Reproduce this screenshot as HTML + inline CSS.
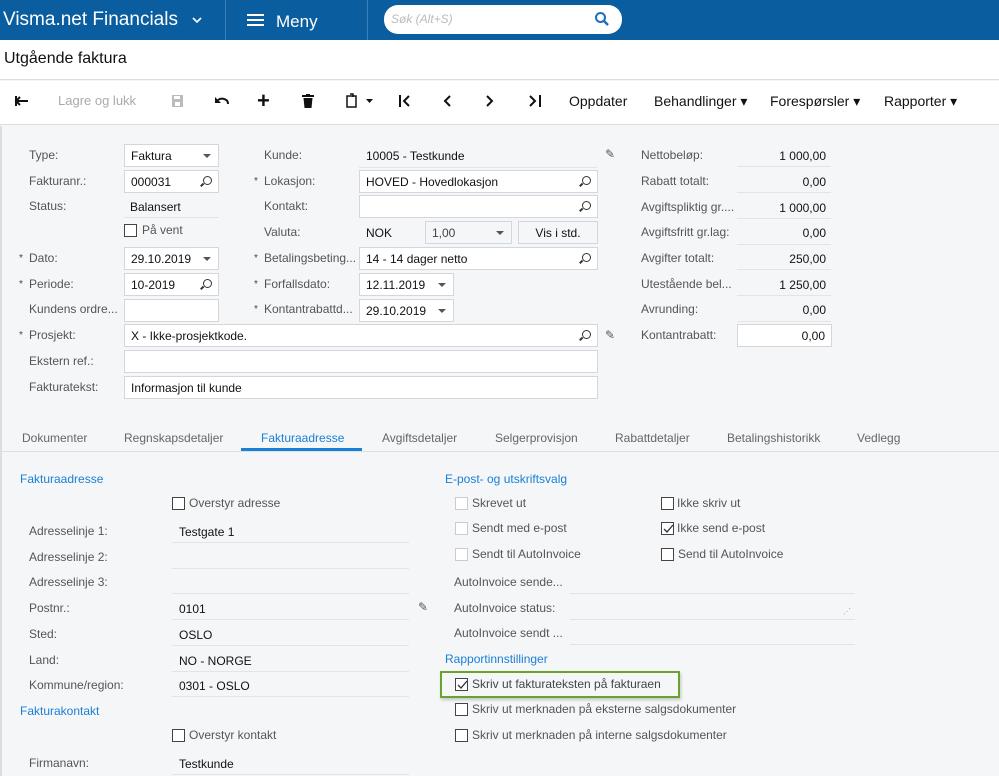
<!DOCTYPE html>
<html><head><meta charset="utf-8"><style>
*{box-sizing:border-box;margin:0;padding:0}
body{width:999px;height:776px;overflow:hidden;background:#f4f6f8;font-family:"Liberation Sans",Arial,sans-serif;font-size:12px;color:#222;position:relative}
.a{position:absolute;white-space:nowrap}
.l{position:absolute;color:#555;white-space:nowrap;font-size:12px}
.v{position:absolute;white-space:nowrap;color:#111}
.in{position:absolute;background:#fff;border:1px solid #d3d6da;height:23px;padding:4px 6px;color:#111;white-space:nowrap}
.ul{position:absolute;border-bottom:1px solid #e2e4e7}
.st{position:absolute;font-size:10px;color:#444}
.cb{position:absolute;width:13px;height:13px;border:1px solid #444;background:#fff}
.cbd{position:absolute;width:13px;height:13px;border:1px solid #ccc;background:#fff}
.h{position:absolute;color:#1a7fd6;font-size:12px}
.tb{position:absolute;top:93px;font-size:14px;color:#111}
.tab{position:absolute;top:431px;color:#666;font-size:12px}
.dd:after{content:"";position:absolute;right:7px;top:9px;border:4px solid transparent;border-top:4px solid #555}
.mag{position:absolute;right:6px;top:5px;width:9px;height:9px;border:1.5px solid #333;border-radius:50%}
.mag:after{content:"";position:absolute;left:-4px;top:7px;width:4px;height:1.5px;background:#333;transform:rotate(-45deg)}
</style></head><body>
<div class="a" style="left:0;top:0;width:999px;height:40px;background:#0a5e9f"></div>
<div class="a" style="left:225px;top:0;width:1px;height:40px;background:#3a7fb6"></div>
<div class="a" style="left:367px;top:0;width:1px;height:40px;background:#3a7fb6"></div>
<div class="a" style="left:3px;top:9px;color:#fff;font-size:19px">Visma.net Financials</div>
<svg class="a" style="left:192px;top:17px" width="10" height="7"><path d="M1 1l4 4 4-4" stroke="#fff" stroke-width="1.6" fill="none"/></svg>
<div class="a" style="left:247px;top:14px;width:17px;height:2px;background:#fff;box-shadow:0 5px 0 #fff,0 10px 0 #fff"></div>
<div class="a" style="left:276px;top:12px;color:#fff;font-size:17px">Meny</div>
<div class="a" style="left:384px;top:5px;width:238px;height:29px;background:#fff;border-radius:14px"></div>
<div class="a" style="left:391px;top:12px;color:#bbb;font-size:12px;font-style:italic">Søk (Alt+S)</div>
<svg class="a" style="left:594px;top:11px" width="16" height="16"><circle cx="6.5" cy="6.5" r="4.5" stroke="#1a6fc0" stroke-width="2" fill="none"/><path d="M10 10l4 4" stroke="#1a6fc0" stroke-width="2.5"/></svg>
<div class="a" style="left:0;top:40px;width:999px;height:40px;background:#fff;border-bottom:1px solid #ddd"></div>
<div class="a" style="left:4px;top:50px;font-size:16px;color:#111">Utgående faktura</div>
<div class="a" style="left:0;top:81px;width:999px;height:44px;background:#fff;border-bottom:1px solid #ddd"></div>
<svg class="a" style="left:14px;top:95px" width="16" height="12"><path d="M2 6h12M6 2L2 6l4 4M2 1v10" stroke="#111" stroke-width="2" fill="none"/></svg>
<div class="tb" style="left:58px;color:#aaa;font-size:13px">Lagre og lukk</div>
<svg class="a" style="left:171px;top:94px" width="13" height="14"><rect x="1" y="1" width="11" height="12" fill="#bbb"/><rect x="3" y="2" width="6" height="3" fill="#fff"/><rect x="4" y="8" width="5" height="4" fill="#fff"/></svg>
<svg class="a" style="left:214px;top:95px" width="16" height="12"><path d="M4 5a6 5 0 0 1 10 4" stroke="#111" stroke-width="2" fill="none"/><path d="M1 2v6h6z" fill="#111"/></svg>
<div class="tb" style="left:257px;top:88px;font-size:22px;font-weight:bold">+</div>
<svg class="a" style="left:302px;top:94px" width="12" height="14"><rect x="0" y="1" width="12" height="2" fill="#111"/><rect x="4" y="0" width="4" height="2" fill="#111"/><path d="M1.5 4h9l-1 10h-7z" fill="#111"/></svg>
<svg class="a" style="left:345px;top:93px" width="30" height="15"><path d="M2 3h9v11H2zM5 1h3v3" stroke="#111" stroke-width="1.5" fill="none"/><path d="M21 6h7l-3.5 4z" fill="#111"/></svg>
<svg class="a" style="left:398px;top:94px" width="14" height="14"><path d="M2 1v12M11 2L6 7l5 5" stroke="#111" stroke-width="2" fill="none"/></svg>
<svg class="a" style="left:441px;top:94px" width="12" height="14"><path d="M9 2L4 7l5 5" stroke="#111" stroke-width="2" fill="none"/></svg>
<svg class="a" style="left:484px;top:94px" width="12" height="14"><path d="M3 2l5 5-5 5" stroke="#111" stroke-width="2" fill="none"/></svg>
<svg class="a" style="left:528px;top:94px" width="14" height="14"><path d="M2 2l5 5-5 5M12 1v12" stroke="#111" stroke-width="2" fill="none"/></svg>
<div class="tb" style="left:569px">Oppdater</div>
<div class="tb" style="left:654px">Behandlinger ▾</div>
<div class="tb" style="left:770px">Forespørsler ▾</div>
<div class="tb" style="left:884px">Rapporter ▾</div>
<div class="a" style="left:0;top:126px;width:2px;height:650px;background:#ddd"></div>

<div class="l" style="left:29px;top:148px">Type:</div>
<div class="in dd" style="left:124px;top:144px;width:95px">Faktura</div>
<div class="l" style="left:29px;top:174px">Fakturanr.:</div>
<div class="in" style="left:124px;top:170px;width:95px">000031<span class="mag"></span></div>
<div class="l" style="left:29px;top:199px">Status:</div>
<div class="v" style="left:130px;top:200px">Balansert</div><div class="ul" style="left:124px;top:217px;width:95px"></div>
<div class="cb" style="left:124px;top:224px"></div><div class="l" style="left:142px;top:223px">På vent</div>
<div class="st" style="left:19px;top:253px">*</div><div class="l" style="left:29px;top:251px">Dato:</div>
<div class="in dd" style="left:124px;top:247px;width:95px">29.10.2019</div>
<div class="st" style="left:19px;top:279px">*</div><div class="l" style="left:29px;top:277px">Periode:</div>
<div class="in" style="left:124px;top:273px;width:95px">10-2019<span class="mag"></span></div>
<div class="l" style="left:29px;top:302px">Kundens ordre...</div>
<div class="in" style="left:124px;top:299px;width:95px"></div>
<div class="st" style="left:19px;top:330px">*</div><div class="l" style="left:29px;top:328px">Prosjekt:</div>
<div class="in" style="left:124px;top:324px;width:474px">X - Ikke-prosjektkode.<span class="mag"></span></div>
<div class="l" style="left:29px;top:354px">Ekstern ref.:</div>
<div class="in" style="left:124px;top:350px;width:474px"></div>
<div class="l" style="left:29px;top:380px">Fakturatekst:</div>
<div class="in" style="left:124px;top:376px;width:474px">Informasjon til kunde</div>

<div class="l" style="left:264px;top:148px">Kunde:</div>
<div class="v" style="left:366px;top:149px">10005 - Testkunde</div><div class="ul" style="left:359px;top:167px;width:238px"></div>
<div class="st" style="left:254px;top:176px">*</div><div class="l" style="left:264px;top:174px">Lokasjon:</div>
<div class="in" style="left:359px;top:170px;width:239px">HOVED - Hovedlokasjon<span class="mag"></span></div>
<div class="l" style="left:264px;top:199px">Kontakt:</div>
<div class="in" style="left:359px;top:195px;width:239px"><span class="mag"></span></div>
<div class="l" style="left:264px;top:225px">Valuta:</div>
<div class="v" style="left:366px;top:226px">NOK</div>
<div class="in dd" style="left:425px;top:221px;width:87px;background:#f4f6f8;color:#444">1,00</div>
<div class="in" style="left:518px;top:221px;width:80px;background:#f4f6f8;text-align:center">Vis i std.</div>
<div class="st" style="left:254px;top:253px">*</div><div class="l" style="left:264px;top:251px">Betalingsbeting...</div>
<div class="in" style="left:359px;top:247px;width:239px">14 - 14 dager netto<span class="mag"></span></div>
<div class="st" style="left:254px;top:279px">*</div><div class="l" style="left:264px;top:277px">Forfallsdato:</div>
<div class="in dd" style="left:359px;top:273px;width:95px">12.11.2019</div>
<div class="st" style="left:254px;top:304px">*</div><div class="l" style="left:264px;top:302px">Kontantrabattd...</div>
<div class="in dd" style="left:359px;top:299px;width:95px">29.10.2019</div>
<div class="a" style="left:605px;top:147px;font-size:12px;color:#555">✎</div>
<div class="a" style="left:605px;top:328px;font-size:12px;color:#555">✎</div>

<div class="l" style="left:641px;top:148px">Nettobeløp:</div><div class="v" style="left:737px;width:89px;text-align:right;top:149px">1 000,00</div><div class="ul" style="left:737px;top:166px;width:94px"></div>
<div class="l" style="left:641px;top:174px">Rabatt totalt:</div><div class="v" style="left:737px;width:89px;text-align:right;top:175px">0,00</div><div class="ul" style="left:737px;top:192px;width:94px"></div>
<div class="l" style="left:641px;top:200px">Avgiftspliktig gr....</div><div class="v" style="left:737px;width:89px;text-align:right;top:201px">1 000,00</div><div class="ul" style="left:737px;top:218px;width:94px"></div>
<div class="l" style="left:641px;top:225px">Avgiftsfritt gr.lag:</div><div class="v" style="left:737px;width:89px;text-align:right;top:226px">0,00</div><div class="ul" style="left:737px;top:244px;width:94px"></div>
<div class="l" style="left:641px;top:251px">Avgifter totalt:</div><div class="v" style="left:737px;width:89px;text-align:right;top:252px">250,00</div><div class="ul" style="left:737px;top:269px;width:94px"></div>
<div class="l" style="left:641px;top:277px">Utestående bel...</div><div class="v" style="left:737px;width:89px;text-align:right;top:278px">1 250,00</div><div class="ul" style="left:737px;top:295px;width:94px"></div>
<div class="l" style="left:641px;top:302px">Avrunding:</div><div class="v" style="left:737px;width:89px;text-align:right;top:303px">0,00</div><div class="ul" style="left:737px;top:321px;width:94px"></div>
<div class="l" style="left:641px;top:328px">Kontantrabatt:</div><div class="in" style="left:737px;top:324px;width:95px;text-align:right">0,00</div>

<div class="a" style="left:2px;top:451px;width:997px;height:1px;background:#dcdfe3"></div>
<div class="tab" style="left:22px">Dokumenter</div>
<div class="tab" style="left:124px">Regnskapsdetaljer</div>
<div class="tab" style="left:261px;color:#1a7fd6">Fakturaadresse</div>
<div class="a" style="left:241px;top:448px;width:121px;height:3px;background:#1a7fd6"></div>
<div class="tab" style="left:382px">Avgiftsdetaljer</div>
<div class="tab" style="left:495px">Selgerprovisjon</div>
<div class="tab" style="left:615px">Rabattdetaljer</div>
<div class="tab" style="left:727px">Betalingshistorikk</div>
<div class="tab" style="left:857px">Vedlegg</div>

<div class="h" style="left:20px;top:472px">Fakturaadresse</div>
<div class="cb" style="left:172px;top:497px"></div><div class="l" style="left:189px;top:496px">Overstyr adresse</div>
<div class="l" style="left:29px;top:524px">Adresselinje 1:</div><div class="v" style="left:179px;top:525px">Testgate 1</div><div class="ul" style="left:172px;top:542px;width:237px"></div>
<div class="l" style="left:29px;top:550px">Adresselinje 2:</div><div class="ul" style="left:172px;top:568px;width:237px"></div>
<div class="l" style="left:29px;top:575px">Adresselinje 3:</div><div class="ul" style="left:172px;top:593px;width:237px"></div>
<div class="l" style="left:29px;top:601px">Postnr.:</div><div class="v" style="left:179px;top:602px">0101</div><div class="ul" style="left:172px;top:619px;width:237px"></div>
<div class="a" style="left:418px;top:600px;font-size:12px;color:#555">✎</div>
<div class="l" style="left:29px;top:627px">Sted:</div><div class="v" style="left:179px;top:628px">OSLO</div><div class="ul" style="left:172px;top:645px;width:237px"></div>
<div class="l" style="left:29px;top:653px">Land:</div><div class="v" style="left:179px;top:654px">NO - NORGE</div><div class="ul" style="left:172px;top:671px;width:237px"></div>
<div class="l" style="left:29px;top:678px">Kommune/region:</div><div class="v" style="left:179px;top:679px">0301 - OSLO</div><div class="ul" style="left:172px;top:696px;width:237px"></div>
<div class="h" style="left:20px;top:704px">Fakturakontakt</div>
<div class="cb" style="left:172px;top:729px"></div><div class="l" style="left:189px;top:728px">Overstyr kontakt</div>
<div class="l" style="left:29px;top:756px">Firmanavn:</div><div class="v" style="left:179px;top:757px">Testkunde</div><div class="ul" style="left:172px;top:774px;width:237px"></div>

<div class="h" style="left:445px;top:472px">E-post- og utskriftsvalg</div>
<div class="cbd" style="left:455px;top:497px"></div><div class="l" style="left:472px;top:496px">Skrevet ut</div>
<div class="cbd" style="left:455px;top:522px"></div><div class="l" style="left:472px;top:521px">Sendt med e-post</div>
<div class="cbd" style="left:455px;top:548px"></div><div class="l" style="left:472px;top:547px">Sendt til AutoInvoice</div>
<div class="cb" style="left:661px;top:497px"></div><div class="l" style="left:677px;top:496px">Ikke skriv ut</div>
<div class="cb" style="left:661px;top:522px"></div><svg class="a" style="left:662px;top:523px" width="12" height="12"><path d="M2 6l3 3 6-7" stroke="#333" stroke-width="1.3" fill="none"/></svg><div class="l" style="left:677px;top:521px">Ikke send e-post</div>
<div class="cb" style="left:661px;top:548px"></div><div class="l" style="left:678px;top:547px">Send til AutoInvoice</div>
<div class="l" style="left:454px;top:575px">AutoInvoice sende...</div><div class="ul" style="left:570px;top:593px;width:285px"></div>
<div class="l" style="left:454px;top:601px">AutoInvoice status:</div><div class="ul" style="left:570px;top:619px;width:285px"></div>
<div class="a" style="left:843px;top:607px;font-size:8px;color:#999">⋰</div>
<div class="l" style="left:454px;top:626px">AutoInvoice sendt ...</div><div class="ul" style="left:570px;top:644px;width:285px"></div>
<div class="h" style="left:445px;top:652px">Rapportinnstillinger</div>
<div class="a" style="left:440px;top:671px;width:240px;height:27px;border:2px solid #6aa12f;box-shadow:1px 2px 3px rgba(0,0,0,.2)"></div>
<div class="cb" style="left:455px;top:678px"></div><svg class="a" style="left:456px;top:679px" width="12" height="12"><path d="M2 6l3 3 6-7" stroke="#333" stroke-width="1.3" fill="none"/></svg><div class="v" style="left:472px;top:677px;color:#444">Skriv ut fakturateksten på fakturaen</div>
<div class="cb" style="left:455px;top:703px"></div><div class="l" style="left:472px;top:702px">Skriv ut merknaden på eksterne salgsdokumenter</div>
<div class="cb" style="left:455px;top:729px"></div><div class="l" style="left:472px;top:728px">Skriv ut merknaden på interne salgsdokumenter</div>
</body></html>
